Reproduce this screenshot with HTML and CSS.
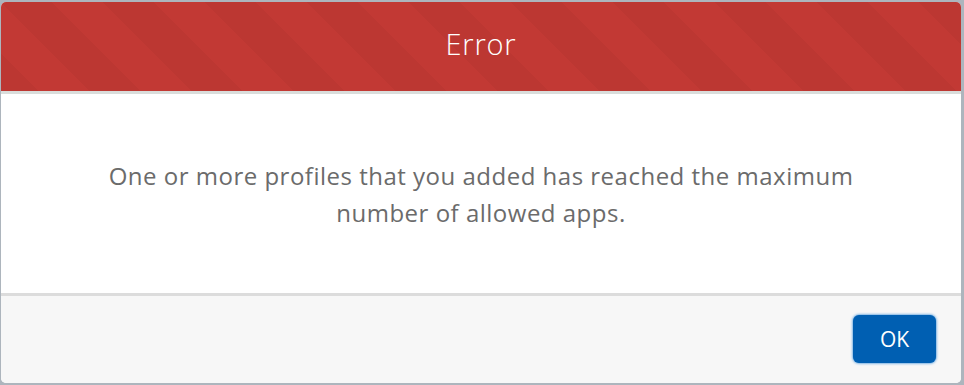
FILE: index.html
```html
<!DOCTYPE html>
<html lang="en">
<head>
<meta charset="utf-8">
<title>Error</title>
<link rel="stylesheet" href="styles.css">
</head>
<body>
<div class="backdrop">
  <section class="modal" role="alertdialog" aria-labelledby="modal-title">
    <header class="modal-header">
      <h2 id="modal-title" class="modal-title">Error</h2>
    </header>
    <div class="modal-body">
      <p class="modal-message">One or more profiles that you added has reached the maximum<br>number of allowed apps.</p>
    </div>
    <footer class="modal-footer">
      <button class="btn-brand" type="button">OK</button>
    </footer>
  </section>
</div>
</body>
</html>
```

FILE: styles.css
```css
html, body {
  margin: 0;
  padding: 0;
  height: 100%;
}

body {
  background: #adb5bd;
  font-family: "Open Sans", "Liberation Sans", sans-serif;
}

.backdrop {
  padding: 2px 3px 2px 1px;
}

.modal {
  width: 960px;
  height: 381px;
  display: flex;
  flex-direction: column;
  border-radius: 5px;
  overflow: hidden;
  background: #ffffff;
}

.modal-header {
  height: 89px;
  box-sizing: content-box;
  flex: none;
  display: flex;
  align-items: center;
  justify-content: center;
  background-color: #c23934;
  background-image: linear-gradient(45deg,
    rgba(0, 0, 0, 0.03) 25%, transparent 25%,
    transparent 50%, rgba(0, 0, 0, 0.03) 50%,
    rgba(0, 0, 0, 0.03) 75%, transparent 75%, transparent);
  background-size: 102px 102px;
  border-bottom: 3px solid #d9dddb;
}

.modal-title {
  margin: 0 0 6px 0;
  color: #ffffff;
  font-weight: 300;
  font-size: 29px;
  line-height: 1;
  letter-spacing: 0.8px;
}

.modal-body {
  flex: 1;
  display: flex;
  align-items: center;
  justify-content: center;
  background: #ffffff;
}

.modal-message {
  margin: 0;
  text-align: center;
  color: #6b6b6b;
  font-size: 24px;
  line-height: 37px;
  letter-spacing: 0.5px;
}

.modal-footer {
  flex: none;
  box-sizing: border-box;
  height: 90px;
  border-top: 3px solid #dcdcdc;
  background: #f7f7f7;
  display: flex;
  justify-content: flex-end;
  align-items: flex-start;
  padding: 19px 25px 0 0;
}

.btn-brand {
  width: 83px;
  height: 48px;
  border: 0;
  border-radius: 6px;
  background: #005fb2;
  color: #ffffff;
  font-family: inherit;
  font-size: 21px;
  box-shadow: 0 0 3px #0070d2;
  cursor: pointer;
}
```
